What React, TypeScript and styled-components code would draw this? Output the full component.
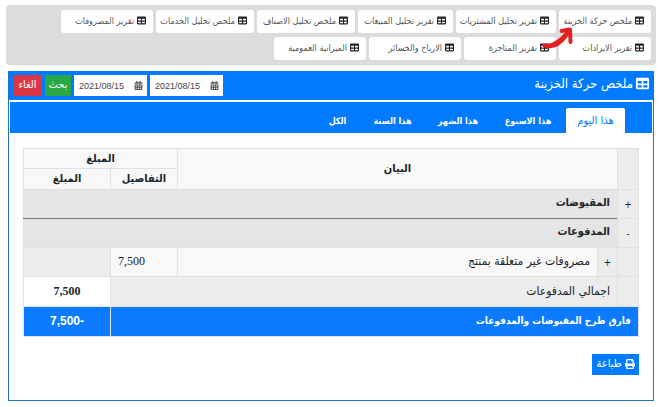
import React, { useState } from "react";
import styled, { createGlobalStyle } from "styled-components";
import { FaTable, FaCalendarAlt, FaPrint } from "react-icons/fa";

const GlobalStyle = createGlobalStyle`
  *, *::before, *::after { box-sizing: border-box; }
  html { direction: rtl; }
  body {
    margin: 0;
    background: #fff;
    color: #212529;
    font-family: "DejaVu Sans Condensed", "DejaVu Sans", sans-serif;
    font-size: 12px;
  }
  button, input { font-family: inherit; margin: 0; }
`;

const Page = styled.div`
  position: relative;
  padding: 5px 4px 5px 6px;
`;

const Reports = styled.nav`
  display: flex;
  flex-wrap: wrap;
  gap: 4px 3px;
  padding: 5px 5px 5px 50px;
  background: #dcdcdc;
  border-radius: 4px;
`;

const ReportLink = styled.a<{ $width: number }>`
  display: flex;
  align-items: center;
  gap: 3px;
  width: ${(p) => p.$width}px;
  height: 23px;
  padding: 0 7px 2px 0;
  border-radius: 3px;
  background: #fff;
  color: #555;
  font-size: 9px;
  line-height: 20px;
  white-space: nowrap;
  text-decoration: none;
  svg { color: #222; font-size: 9px; flex: none; }
`;

const Arrow = styled.svg`
  position: absolute;
  top: 26px;
  right: 86px;
  width: 34px;
  height: 24px;
  pointer-events: none;
`;

const Card = styled.section`
  margin: 6px 2px 0;
  padding-bottom: 25px;
  border: 1px solid #1f74c8;
`;

const CardHeader = styled.header`
  display: flex;
  align-items: center;
  height: 29px;
  padding: 0 4px;
  margin-top: -1px;
  background: #007bff;
  color: #fff;
`;

const Title = styled.h1`
  display: flex;
  align-items: center;
  gap: 3px;
  margin: 0;
  padding-bottom: 4px;
  font-size: 13px;
  font-weight: 400;
  line-height: 20px;
  svg { font-size: 13px; }
`;

const Filters = styled.form`
  display: flex;
  gap: 3px;
  margin-right: auto;
`;

const DateBox = styled.label`
  display: flex;
  align-items: center;
  width: 73px;
  height: 21px;
  padding: 0 4px 0 5px;
  background: #fff;
  color: #555;
  svg { font-size: 9px; flex: none; }
`;

const DateInput = styled.input`
  flex: 1;
  min-width: 0;
  padding: 0;
  border: 0;
  outline: 0;
  background: transparent;
  color: #444;
  direction: ltr;
  && { font-family: "Liberation Sans", sans-serif; }
  font-size: 9px;
`;

const ActionButton = styled.button<{ $color: string; $width: number }>`
  display: flex;
  align-items: center;
  justify-content: center;
  gap: 3px;
  width: ${(p) => p.$width}px;
  height: 21px;
  padding: 0 0 2px;
  border: 0;
  background: ${(p) => p.$color};
  color: #fff;
  font-size: 11px;
  white-space: nowrap;
  svg { font-size: 10px; }
`;

const Tabs = styled.div`
  display: flex;
  height: 31px;
  margin: 2px 1px 0;
  padding: 6px 27px 0;
  background: #007bff;
`;

const Tab = styled.button<{ $active: boolean; $width: number }>`
  width: ${(p) => p.$width}px;
  padding: 0;
  border: 0;
  border-radius: 2px 2px 0 0;
  background: ${(p) => (p.$active ? "#fff" : "transparent")};
  color: ${(p) => (p.$active ? "#007bff" : "#fff")};
  font-size: ${(p) => (p.$active ? 11 : 9)}px;
  font-weight: ${(p) => (p.$active ? 400 : 700)};
  white-space: nowrap;
`;

const Body = styled.div`
  padding: 15px 14px 0;
`;

const Table = styled.table`
  width: 100%;
  border-collapse: collapse;
  table-layout: fixed;
`;

const Cell = styled.td<{ $bg?: string }>`
  height: 29px;
  padding: 0 7px 2px;
  border: 1px solid #dee2e6;
  background: ${(p) => p.$bg ?? "#f8f8f8"};
  text-align: right;
  line-height: 16px;
  white-space: nowrap;
`;

const HeadCell = styled(Cell).attrs({ as: "th" })`
  height: 20px;
  padding: 0;
  text-align: center;
  font-size: 11px;
  font-weight: 700;
`;

const SubHeadCell = styled(HeadCell)`
  height: 21px;
`;

const GroupCell = styled(Cell)<{ $rule?: boolean }>`
  font-size: 11px;
  font-weight: 700;
  border-bottom-color: ${(p) => (p.$rule ? "#777" : "#dee2e6")};
`;

const ToggleCell = styled(Cell)`
  padding: 0;
  text-align: center;
`;

const Toggle = styled.button`
  width: 100%;
  padding: 0;
  border: 0;
  background: none;
  color: #212529;
  font-size: 10px;
`;

const SumLabel = styled(Cell)`
  height: 30px;
`;

const Amount = styled(Cell)<{ $bold?: boolean }>`
  font-family: "Liberation Serif", serif;
  font-weight: ${(p) => (p.$bold ? 700 : 400)};
  text-align: ${(p) => (p.$bold ? "center" : "left")};
`;

const TotalLabel = styled(Cell)`
  height: 30px;
  color: #fff;
  font-size: 10px;
  font-weight: 700;
`;

const TotalAmount = styled(TotalLabel)`
  font-family: "Liberation Sans", sans-serif;
  font-size: 12px;
  text-align: center;
`;

const Footer = styled.footer`
  padding-top: 17px;
`;

const reports: [string, number][] = [
  ["ملخص حركة الخزينة", 92],
  ["تقرير تحليل المشتريات", 100],
  ["تقرير تحليل المبيعات", 95],
  ["ملخص تحليل الاصناف", 98],
  ["ملخص تحليل الخدمات", 98],
  ["تقرير المصروفات", 92],
  ["تقرير الايرادات", 92],
  ["تقرير المتاجرة", 92],
  ["الارباح والخسائر", 92],
  ["الميزانية العمومية", 92],
];

const tabs: [string, number][] = [
  ["هذا اليوم", 59],
  ["هذا الاسبوع", 76],
  ["هذا الشهر", 64],
  ["هذا السنة", 67],
  ["الكل", 43],
];

const grey = "#ececec";
const group = "#e5e5e5";
const blue = "#0d7bff";

export default function App() {
  const [active, setActive] = useState(0);
  return (
    <>
      <GlobalStyle />
      <Page>
        <Reports>
          {reports.map(([name, width]) => (
            <ReportLink key={name} href="#" $width={width}>
              <FaTable />
              {name}
            </ReportLink>
          ))}
        </Reports>
        <Arrow viewBox="0 0 34 24" aria-hidden="true">
          <path
            d="M2 18C1 22 9 24 17 20.500C23 17.500 27 12 30.500 6L27.500 3.500C21 11.500 15 16.500 8 17.800Z"
            fill="#e3201f"
          />
          <path
            d="M21.500 5L30 3.500L30.500 16"
            fill="none"
            stroke="#e3201f"
            strokeWidth="4"
            strokeLinecap="round"
            strokeLinejoin="round"
          />
        </Arrow>

        <Card>
          <CardHeader>
            <Title>
              <FaTable />
              ملخص حركة الخزينة
            </Title>
            <Filters onSubmit={(e) => e.preventDefault()}>
              <DateBox>
                <FaCalendarAlt />
                <DateInput aria-label="من" defaultValue="2021/08/15" />
              </DateBox>
              <DateBox>
                <FaCalendarAlt />
                <DateInput aria-label="الى" defaultValue="2021/08/15" />
              </DateBox>
              <ActionButton type="submit" $color="#28a745" $width={26}>
                بحث
              </ActionButton>
              <ActionButton type="button" $color="#dc3545" $width={29}>
                الغاء
              </ActionButton>
            </Filters>
          </CardHeader>

          <Tabs role="tablist">
            {tabs.map(([name, width], i) => (
              <Tab
                key={name}
                role="tab"
                aria-selected={i === active}
                $active={i === active}
                $width={width}
                onClick={() => setActive(i)}
              >
                {name}
              </Tab>
            ))}
          </Tabs>

          <Body>
            <Table>
              <colgroup>
                <col style={{ width: 21 }} />
                <col style={{ width: 20 }} />
                <col />
                <col style={{ width: 67 }} />
                <col style={{ width: 87 }} />
              </colgroup>
              <thead>
                <tr>
                  <HeadCell rowSpan={2} $bg={grey} />
                  <HeadCell rowSpan={2} colSpan={2}>البيان</HeadCell>
                  <HeadCell colSpan={2}>المبلغ</HeadCell>
                </tr>
                <tr>
                  <SubHeadCell>التفاصيل</SubHeadCell>
                  <SubHeadCell>المبلغ</SubHeadCell>
                </tr>
              </thead>
              <tbody>
                <tr>
                  <ToggleCell $bg={grey}><Toggle>+</Toggle></ToggleCell>
                  <GroupCell colSpan={4} $bg={group} $rule>المقبوضات</GroupCell>
                </tr>
                <tr>
                  <ToggleCell $bg={grey}><Toggle>-</Toggle></ToggleCell>
                  <GroupCell colSpan={4} $bg={group}>المدفوعات</GroupCell>
                </tr>
                <tr>
                  <Cell $bg={grey} />
                  <ToggleCell $bg={grey}><Toggle>+</Toggle></ToggleCell>
                  <Cell>مصروفات غير متعلقة بمنتج</Cell>
                  <Amount>7,500</Amount>
                  <Cell $bg={grey} />
                </tr>
                <tr>
                  <Cell $bg={grey} />
                  <SumLabel colSpan={3} $bg={grey}>اجمالي المدفوعات</SumLabel>
                  <Amount $bg="#fff" $bold>7,500</Amount>
                </tr>
                <tr>
                  <TotalLabel colSpan={4} $bg={blue}>
                    فارق طرح المقبوضات والمدفوعات
                  </TotalLabel>
                  <TotalAmount $bg={blue}>-7,500</TotalAmount>
                </tr>
              </tbody>
            </Table>
            <Footer>
              <ActionButton type="button" $color="#007bff" $width={47}>
                <FaPrint />
                طباعة
              </ActionButton>
            </Footer>
          </Body>
        </Card>
      </Page>
    </>
  );
}
